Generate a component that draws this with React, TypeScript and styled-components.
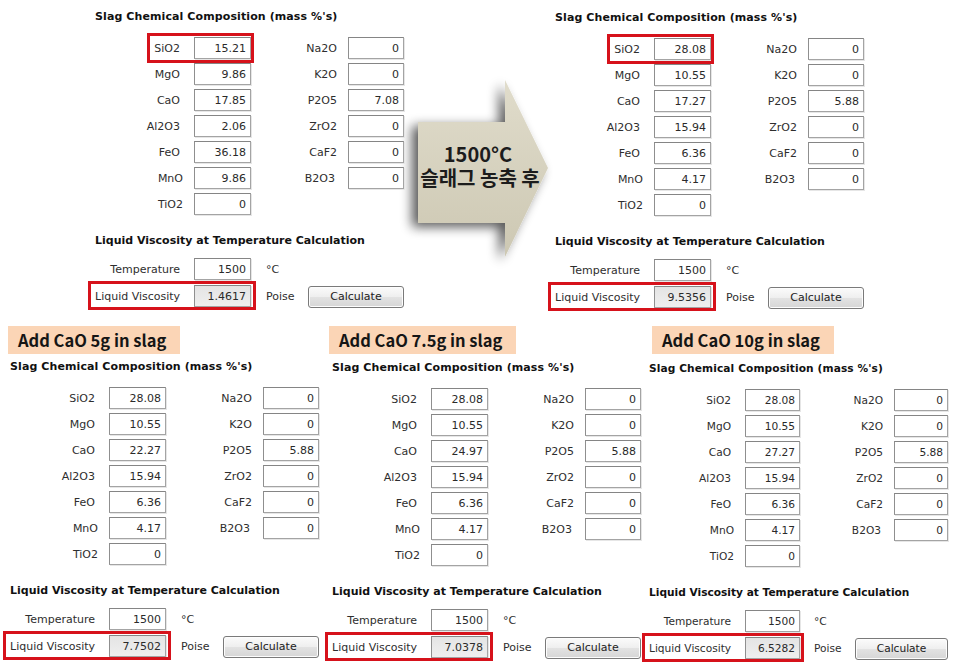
import React from "react";
import styled, { createGlobalStyle, css } from "styled-components";

const GlobalStyle = createGlobalStyle`
  html, body {
    margin: 0;
    padding: 0;
    background: #ffffff;
  }
  body {
    width: 957px;
    height: 667px;
    overflow: hidden;
    font-family: "DejaVu Sans", Verdana, sans-serif;
  }
`;

const px = (v: number, s: number) => `${Math.round(v * s)}px`;

type S = { $s: number };

const Page = styled.div`
  width: 957px;
  height: 667px;
  display: flex;
  flex-direction: column;
  color: #2a2a2a;
`;

const TopRow = styled.div`
  display: grid;
  grid-template-columns: 309px 151px 1fr;
  align-items: start;
  height: 316px;
  padding: 10px 0 0 95px;
`;

const BottomRow = styled.div`
  display: grid;
  grid-template-columns: 322px 317px 1fr;
  align-items: start;
  padding-left: 10px;
`;

const Column = styled.div`
  display: flex;
  flex-direction: column;
`;

const Tag = styled.div<{ $dx: number }>`
  align-self: flex-start;
  margin-left: ${(p) => p.$dx}px;
  height: 28px;
  padding: 0 14px 0 10px;
  background: #fbd5b6;
  font-family: "Noto Sans CJK KR", "Noto Sans", sans-serif;
  font-weight: bold;
  font-size: 16.5px;
  line-height: 28px;
  color: #151515;
  white-space: nowrap;
`;

const PanelBox = styled.div<{ $top: number }>`
  display: flex;
  flex-direction: column;
  margin-top: ${(p) => p.$top}px;
`;

const Heading = styled.div<S>`
  font-weight: bold;
  font-size: ${(p) => 11 * p.$s}px;
  line-height: 13px;
  color: #111;
  white-space: nowrap;
`;

const Title = styled(Heading)`
  letter-spacing: 0.1px;
`;

const SubHeading = styled(Heading)`
  margin-top: 19px;
`;

const Grid = styled.div<S>`
  display: grid;
  grid-template-columns: ${(p) => px(156, p.$s)} ${(p) => px(153, p.$s)};
  grid-template-rows: repeat(7, 22px);
  grid-auto-flow: column;
  row-gap: 4px;
  margin-top: 14px;
`;

const markBox = css`
  &::after {
    content: "";
    position: absolute;
    box-sizing: border-box;
    border: 3px solid #d6121b;
    pointer-events: none;
  }
`;

const Cell = styled.div<S & { $mark?: boolean }>`
  position: relative;
  display: flex;
  align-items: center;
  ${(p) =>
    p.$mark &&
    css`
      ${markBox}
      &::after {
        left: ${px(52, p.$s)};
        right: -3px;
        top: -4px;
        bottom: -4px;
      }
    `}
`;

const Label = styled.span<S & { $w: number; $gap: number; $dx?: number }>`
  flex: none;
  width: ${(p) => px(p.$w + (p.$dx ?? 0), p.$s)};
  margin-right: ${(p) => px(p.$gap - (p.$dx ?? 0), p.$s)};
  text-align: right;
  font-size: ${(p) => 11 * p.$s}px;
  white-space: nowrap;
  color: #2e2e2e;
`;

const Field = styled.input<S & { $w: number; $ro?: boolean }>`
  flex: none;
  box-sizing: border-box;
  width: ${(p) => px(p.$w, p.$s)};
  height: 22px;
  margin: 0;
  padding: 0 4px 0 0;
  border: 1px solid #a4a4a4;
  border-top-color: #858585;
  border-left-color: #8f8f8f;
  border-radius: 0;
  box-shadow: 1px 1px 0 #e6e6e6;
  background: ${(p) => (p.$ro ? "linear-gradient(#e4e4e4, #efefef)" : "#ffffff")};
  font-family: "DejaVu Sans", Verdana, sans-serif;
  font-size: ${(p) => 11 * p.$s}px;
  color: #2a2a2a;
  text-align: right;
  outline: none;
`;

const CalcRows = styled.div`
  display: flex;
  flex-direction: column;
  gap: 5px;
  margin-top: 11px;
`;

const CalcRow = styled.div<S & { $mark?: boolean }>`
  position: relative;
  display: flex;
  align-items: center;
  height: 22px;
  ${(p) =>
    p.$mark &&
    css`
      ${markBox}
      &::after {
        left: -7px;
        width: ${px(168, p.$s)};
        top: -4px;
        bottom: -3px;
      }
    `}
`;

const Unit = styled.span<S>`
  flex: none;
  width: ${(p) => px(42, p.$s)};
  margin-left: ${(p) => px(15, p.$s)};
  font-size: ${(p) => 11 * p.$s}px;
  color: #2e2e2e;
`;

const Button = styled.button<S>`
  flex: none;
  width: ${(p) => px(96, p.$s)};
  height: 22px;
  margin: 1px 0 0;
  padding: 0;
  border: 1px solid #7a7a7a;
  border-radius: 3px;
  background: linear-gradient(#fbfbfb 0%, #efefef 48%, #e2e2e2 52%, #d6d6d6 100%);
  box-shadow: inset 0 0 0 1px #fdfdfd;
  font-family: "DejaVu Sans", Verdana, sans-serif;
  font-size: ${(p) => 11 * p.$s}px;
  color: #222;
`;

const ArrowWrap = styled.div`
  margin-top: 50px;
  height: 220px;
`;

const ArrowSvg = styled.svg`
  display: block;
  overflow: visible;
`;

type Item = [string, string];

type PanelData = {
  left: Item[];
  right: Item[];
  lv: string;
  markSi?: boolean;
};

const oxidesLeft = ["SiO2", "MgO", "CaO", "Al2O3", "FeO", "MnO", "TiO2"];
const oxidesRight = ["Na2O", "K2O", "P2O5", "ZrO2", "CaF2", "B2O3"];
// a few labels sit a little off the common right edge in the original form
const nudge: Record<string, number> = { MnO: 3, TiO2: 3, B2O3: -2 };

const build = (l: string[], r: string[], lv: string, markSi = false): PanelData => ({
  left: oxidesLeft.map((n, i) => [n, l[i]] as Item),
  right: oxidesRight.map((n, i) => [n, r[i]] as Item),
  lv,
  markSi,
});

const rightAfter = ["0", "0", "5.88", "0", "0", "0"];

const panels = {
  before: build(
    ["15.21", "9.86", "17.85", "2.06", "36.18", "9.86", "0"],
    ["0", "0", "7.08", "0", "0", "0"],
    "1.4617",
    true
  ),
  after: build(["28.08", "10.55", "17.27", "15.94", "6.36", "4.17", "0"], rightAfter, "9.5356", true),
  cao5: build(["28.08", "10.55", "22.27", "15.94", "6.36", "4.17", "0"], rightAfter, "7.7502"),
  cao75: build(["28.08", "10.55", "24.97", "15.94", "6.36", "4.17", "0"], rightAfter, "7.0378"),
  cao10: build(["28.08", "10.55", "27.27", "15.94", "6.36", "4.17", "0"], rightAfter, "6.5282"),
};

function SlagPanel({ data, top = 0, s = 1 }: { data: PanelData; top?: number; s?: number }) {
  return (
    <PanelBox $top={top}>
      <Title $s={s}>Slag Chemical Composition (mass %'s)</Title>
      <Grid $s={s}>
        {data.left.map(([name, v], i) => (
          <Cell key={name} $s={s} $mark={data.markSi && i === 0}>
            <Label $s={s} $w={85} $gap={14} $dx={nudge[name]}>
              {name}
            </Label>
            <Field $s={s} $w={57} readOnly value={v} />
          </Cell>
        ))}
        {data.right.map(([name, v]) => (
          <Cell key={name} $s={s}>
            <Label $s={s} $w={86} $gap={11} $dx={nudge[name]}>
              {name}
            </Label>
            <Field $s={s} $w={56} readOnly value={v} />
          </Cell>
        ))}
      </Grid>
      <SubHeading $s={s}>Liquid Viscosity at Temperature Calculation</SubHeading>
      <CalcRows>
        <CalcRow $s={s}>
          <Label $s={s} $w={85} $gap={14}>
            Temperature
          </Label>
          <Field $s={s} $w={57} readOnly value="1500" />
          <Unit $s={s}>°C</Unit>
        </CalcRow>
        <CalcRow $s={s} $mark>
          <Label $s={s} $w={85} $gap={14}>
            Liquid Viscosity
          </Label>
          <Field $s={s} $w={57} $ro readOnly value={data.lv} />
          <Unit $s={s}>Poise</Unit>
          <Button $s={s}>Calculate</Button>
        </CalcRow>
      </CalcRows>
    </PanelBox>
  );
}

function Arrow() {
  return (
    <ArrowWrap>
      <ArrowSvg width="151" height="220" viewBox="0 0 151 220">
        <defs>
          <linearGradient id="arrowFill" x1="0" y1="0" x2="0" y2="1">
            <stop offset="0" stopColor="#e0dccb" />
            <stop offset="1" stopColor="#cdc8b3" />
          </linearGradient>
          <filter id="arrowShadow" x="-40%" y="-40%" width="180%" height="180%">
            <feGaussianBlur in="SourceAlpha" stdDeviation="6" />
            <feOffset dx="-6" dy="4" result="blur" />
            <feComponentTransfer>
              <feFuncA type="linear" slope="0.65" />
            </feComponentTransfer>
            <feMerge>
              <feMergeNode />
              <feMergeNode in="SourceGraphic" />
            </feMerge>
          </filter>
        </defs>
        <polygon
          points="14,62 101,62 101,20 144,108 101,197 101,163 14,163"
          fill="url(#arrowFill)"
          filter="url(#arrowShadow)"
        />
        <text
          textAnchor="middle"
          fontFamily="'Noto Sans CJK KR', 'Noto Sans', sans-serif"
          fontWeight="bold"
          fill="#1c1c1c"
        >
          <tspan x="74" y="102" fontSize="20">
            1500°C
          </tspan>
          <tspan x="76" y="126" fontSize="20">
            슬래그 농축 후
          </tspan>
        </text>
      </ArrowSvg>
    </ArrowWrap>
  );
}

export default function App() {
  return (
    <Page>
      <GlobalStyle />
      <TopRow>
        <SlagPanel data={panels.before} />
        <Arrow />
        <SlagPanel data={panels.after} top={1} />
      </TopRow>
      <BottomRow>
        <Column>
          <Tag $dx={-2}>Add CaO 5g in slag</Tag>
          <SlagPanel data={panels.cao5} top={6} />
        </Column>
        <Column>
          <Tag $dx={-3}>Add CaO 7.5g in slag</Tag>
          <SlagPanel data={panels.cao75} top={7} />
        </Column>
        <Column>
          <Tag $dx={3}>Add CaO 10g in slag</Tag>
          <SlagPanel data={panels.cao10} top={8} s={0.965} />
        </Column>
      </BottomRow>
    </Page>
  );
}
